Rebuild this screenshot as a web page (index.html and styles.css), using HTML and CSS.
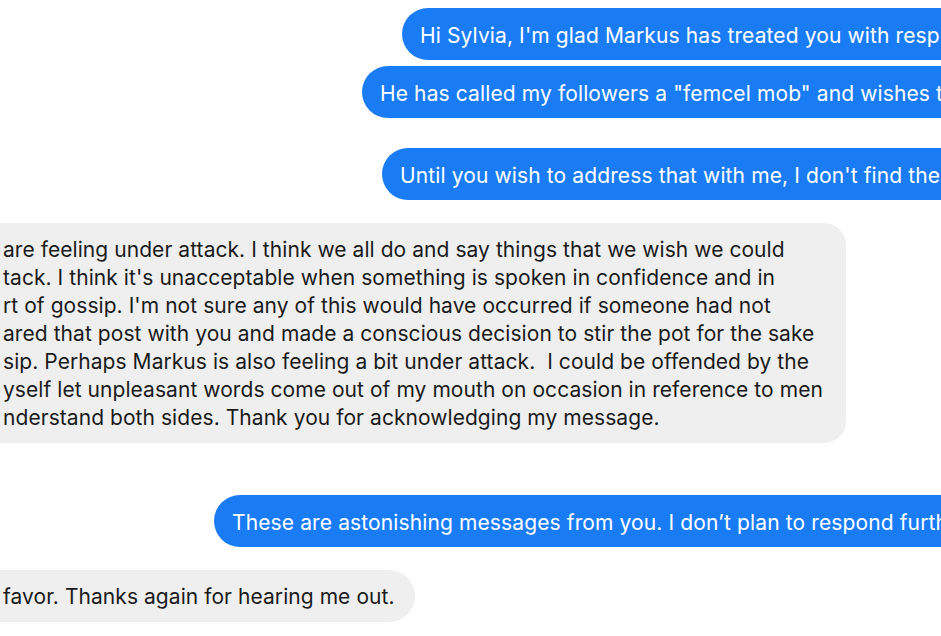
FILE: index.html
```html
<!DOCTYPE html>
<html lang="en">
<head>
<meta charset="utf-8">
<title>Messages</title>
<link rel="stylesheet" href="styles.css">
</head>
<body>
<div class="thread">
  <div class="msg out o1">Hi Sylvia, I'm glad Markus has treated you with resp</div>
  <div class="msg out o2">He has called my followers a "femcel mob" and wishes t</div>
  <div class="msg out o3 gap-l">Until you wish to address that with me, I don't find the</div>
  <div class="msg in long">
    <span class="ln">are feeling under attack. I think we all do and say things that we wish we could</span>
    <span class="ln">tack. I think it's unacceptable when something is spoken in confidence and in</span>
    <span class="ln">rt of gossip. I'm not sure any of this would have occurred if someone had not</span>
    <span class="ln">ared that post with you and made a conscious decision to stir the pot for the sake</span>
    <span class="ln">sip. Perhaps Markus is also feeling a bit under attack.&nbsp; I could be offended by the</span>
    <span class="ln">yself let unpleasant words come out of my mouth on occasion in reference to men</span>
    <span class="ln">nderstand both sides. Thank you for acknowledging my message.</span>
  </div>
  <div class="msg out o4 gap-xl">These are astonishing messages from you. I don’t plan to respond furth</div>
  <div class="msg in short">favor. Thanks again for hearing me out.</div>
</div>
</body>
</html>
```
FILE: styles.css
```css
html, body {
  margin: 0;
  padding: 0;
  background: #ffffff;
}
body {
  width: 941px;
  height: 636px;
  overflow: hidden;
  font-family: Inter, "Noto Sans", sans-serif;
}
.thread {
  display: flex;
  flex-direction: column;
  align-items: flex-start;
  gap: 6px;
  padding-top: 8px;
}
.msg {
  box-sizing: border-box;
  font-size: 21px;
  line-height: 28px;
  padding: 13px 18px 11px;
  white-space: nowrap;
  border-radius: 26px;
}
.out {
  background: #1a7cf5;
  color: #ffffff;
  padding-top: 14px;
  padding-bottom: 10px;
  padding-right: 120px;
  letter-spacing: 0.12px;
}
.o1 { margin-left: 402px; }
.o2 { margin-left: 362px; }
.o3 { margin-left: 382px; }
.o4 { margin-left: 214px; }
.gap-l { margin-top: 24px; }
.gap-xl { margin-top: 46px; }
.in {
  background: #efefef;
  color: #1b1b1b;
  margin-left: -30px;
  padding-left: 33px;
  margin-top: 17px;
  letter-spacing: 0.06px;
}
.long {
  width: 876px;
  border-radius: 22px;
}
.long .ln { display: block; }
.short {
  width: 445px;
}
```
